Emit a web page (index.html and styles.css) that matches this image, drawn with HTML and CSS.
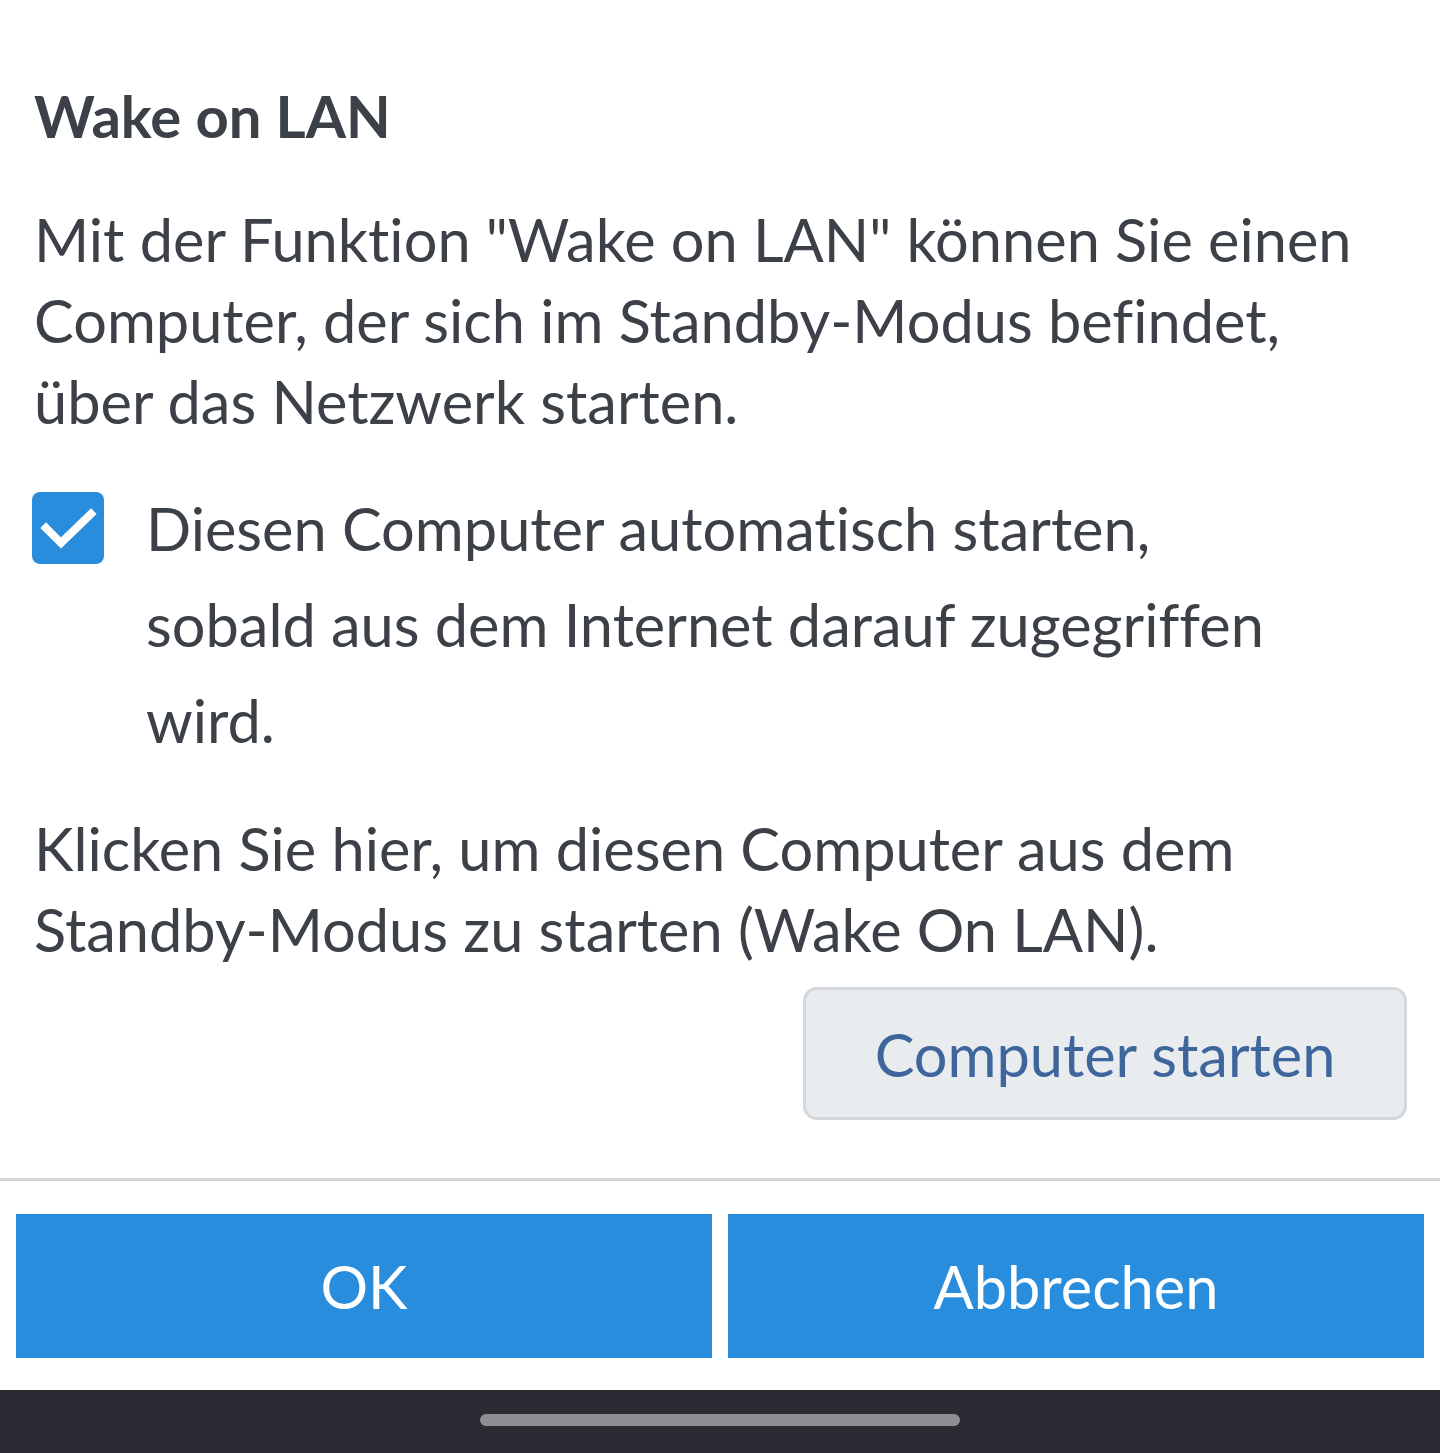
FILE: index.html
```html
<!DOCTYPE html>
<html lang="de">
<head>
  <meta charset="UTF-8">
  <meta name="viewport" content="width=device-width, initial-scale=1.0">
  <title>Wake on LAN</title>
  <link rel="stylesheet" href="styles.css">
</head>
<body>
  <div class="dialog">
    <div class="dialog-body">
      <h1>Wake on LAN</h1>

      <p class="text">Mit der Funktion "Wake on LAN" können Sie einen Computer, der sich im Standby-Modus befindet, über das Netzwerk starten.</p>

      <label class="check-row">
        <span class="checkbox">
          <svg viewBox="0 0 72 72" width="72" height="72">
            <polyline points="14,36 29,51 59,22" fill="none" stroke="#fff" stroke-width="8" stroke-linecap="square"/>
          </svg>
        </span>
        <span class="check-label">Diesen Computer automatisch starten, sobald aus dem Internet darauf zugegriffen wird.</span>
      </label>

      <p class="text text-second">Klicken Sie hier, um diesen Computer aus dem Standby-Modus zu starten (Wake On LAN).</p>

      <div class="start-wrap">
        <button class="btn-start">Computer starten</button>
      </div>
    </div>

    <div class="divider"></div>

    <div class="actions">
      <button class="btn-action">OK</button>
      <button class="btn-action">Abbrechen</button>
    </div>
  </div>

  <div class="nav-bar">
    <div class="nav-handle"></div>
  </div>
</body>
</html>
```

FILE: styles.css
```css
/* Grundwerte */
:root {
  --text-color: #3c4148;
  --primary-color: #298ddd;
  --link-color: #3e669d;
  --light-bg: #e9ecef;
  --light-border: #d4d8dc;
  --divider-color: #d6d6d6;
  --nav-bg: #2b2a32;
}

html, body {
  margin: 0;
  padding: 0;
}

body {
  font-family: 'Lato', 'Noto Sans', sans-serif;
  font-variant-ligatures: no-common-ligatures;
  background-color: #fff;
  color: var(--text-color);
  width: 1440px;
}

.dialog {
  height: 1390px;
  display: flex;
  flex-direction: column;
}

.dialog-body {
  padding: 80px 33px 0 34px;
}

h1 {
  margin: 0;
  font-size: 58px;
  line-height: 72px;
  font-weight: bold;
}

.text {
  margin: 47px 0 0;
  font-size: 59.5px;
  line-height: 81px;
}

.text-second {
  margin-top: 40px;
}

.check-row {
  display: flex;
  align-items: flex-start;
  margin-top: 38px;
  margin-left: -2px;
}

.checkbox {
  flex: 0 0 72px;
  width: 72px;
  height: 72px;
  margin-top: 12px;
  background-color: var(--primary-color);
  border-radius: 8px;
  display: flex;
}

.check-label {
  width: 1164px;
  margin-left: 42px;
  font-size: 59.5px;
  line-height: 96px;
}

.start-wrap {
  display: flex;
  justify-content: flex-end;
  margin-top: 17px;
}

.btn-start {
  width: 604px;
  height: 133px;
  background-color: var(--light-bg);
  border: 3px solid var(--light-border);
  border-radius: 14px;
  color: var(--link-color);
  font-family: inherit;
  font-size: 59.5px;
  padding: 0;
}

.divider {
  margin-top: 58px;
  height: 3px;
  background-color: var(--divider-color);
}

.actions {
  display: flex;
  gap: 16px;
  padding: 33px 16px 0;
}

.btn-action {
  flex: 1;
  height: 144px;
  background-color: var(--primary-color);
  border: none;
  border-radius: 0;
  color: #fff;
  font-family: inherit;
  font-size: 59.5px;
  padding: 0;
}

/* Navigationsleiste */
.nav-bar {
  height: 63px;
  background-color: var(--nav-bg);
  display: flex;
  justify-content: center;
  padding-top: 24px;
  box-sizing: border-box;
}

.nav-handle {
  width: 480px;
  height: 12px;
  border-radius: 6px;
  background-color: #8e8e93;
}
```
